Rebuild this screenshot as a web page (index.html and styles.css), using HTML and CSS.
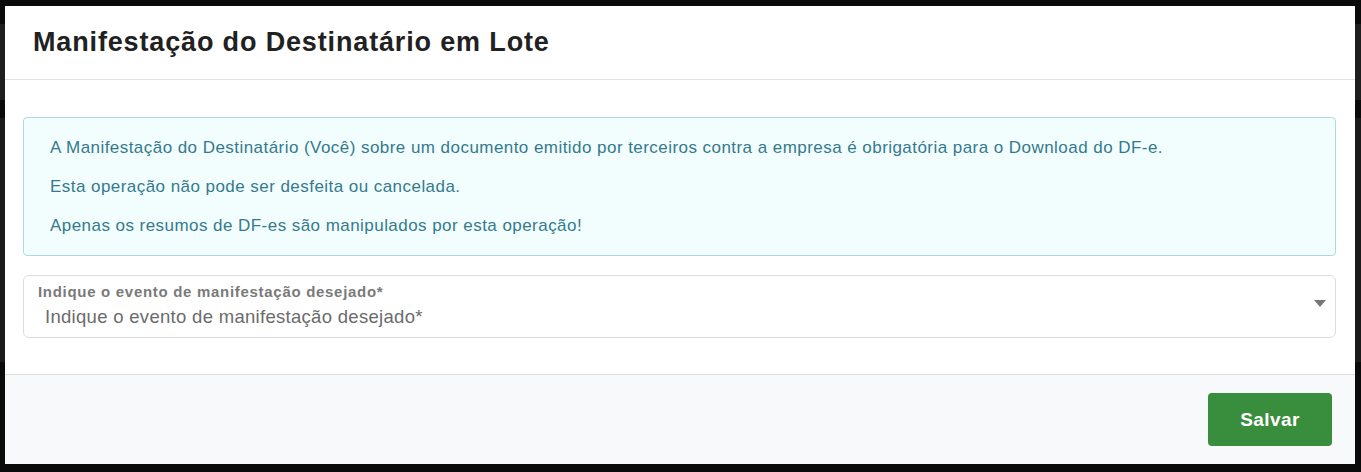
FILE: index.html
```html
<!DOCTYPE html>
<html lang="pt-BR">
<head>
<meta charset="utf-8">
<title>Manifestação do Destinatário em Lote</title>
<link rel="stylesheet" href="styles.css">
</head>
<body>
<div class="modal">
  <header class="modal-header">
    <h2 class="modal-title">Manifestação do Destinatário em Lote</h2>
  </header>
  <main class="modal-body">
    <div class="alert">
      <p>A Manifestação do Destinatário (Você) sobre um documento emitido por terceiros contra a empresa é obrigatória para o Download do DF-e.</p>
      <p>Esta operação não pode ser desfeita ou cancelada.</p>
      <p>Apenas os resumos de DF-es são manipulados por esta operação!</p>
    </div>
    <div class="select">
      <div class="select-text">
        <span class="select-label">Indique o evento de manifestação desejado*</span>
        <span class="select-value">Indique o evento de manifestação desejado*</span>
      </div>
      <svg class="select-arrow" width="12" height="7" viewBox="0 0 12 7"><path d="M0 0H12L6 7Z" fill="#777"/></svg>
    </div>
  </main>
  <footer class="modal-footer">
    <button class="btn-save" type="button">Salvar</button>
  </footer>
</div>
</body>
</html>
```
FILE: styles.css
```css
html, body {
  margin: 0;
  padding: 0;
}
body {
  background: linear-gradient(to bottom, #0a0a0a 0, #0a0a0a 24px, #1e1e1e 24px, #1e1e1e 100px, #0a0a0a 100px, #0a0a0a 118px, #1b1b1b 118px, #1b1b1b 362px, #0a0a0a 362px);
  min-height: 472px;
  padding: 6px 6px 8px 5px;
  box-sizing: border-box;
  font-family: "Liberation Sans", Arial, sans-serif;
}
.modal {
  width: 1350px;
  height: 458px;
  background: #fff;
  display: flex;
  flex-direction: column;
}
.modal-header {
  height: 74px;
  border-bottom: 1px solid #e0e0e0;
  display: flex;
  align-items: center;
  padding-left: 28px;
  box-sizing: border-box;
}
.modal-title {
  margin: 0;
  font-size: 27px;
  letter-spacing: 0.85px;
  font-weight: bold;
  color: #212121;
}
.modal-body {
  padding: 37px 19px 0 18px;
  height: 294px;
  box-sizing: border-box;
  display: flex;
  flex-direction: column;
  gap: 19px;
}
.alert {
  background: #f2fdfe;
  border: 1px solid #aed9e2;
  border-radius: 4px;
  color: #357a8c;
  font-size: 17px;
  letter-spacing: 0.45px;
  padding: 20px 26px 10px 26px;
  height: 139px;
  box-sizing: border-box;
}
.alert p {
  margin: 0 0 19px 0;
  line-height: 20px;
}
.select {
  height: 63px;
  border: 1px solid #dddddd;
  border-radius: 6px;
  box-sizing: border-box;
  display: flex;
  align-items: center;
  padding: 0 9px 0 14px;
}
.select-text {
  flex: 1;
  align-self: flex-start;
  padding-top: 8px;
  display: flex;
  flex-direction: column;
}
.select-label {
  font-size: 15px;
  letter-spacing: 0.7px;
  font-weight: bold;
  color: #7a7a7a;
  line-height: 16px;
}
.select-value {
  font-size: 18.5px;
  letter-spacing: 0.3px;
  color: #6b6b6b;
  line-height: 22px;
  padding-left: 7px;
  margin-top: 6px;
}
.select-arrow {
  margin-top: -6px;
}
.modal-footer {
  flex: 1;
  background: #f8f9fa;
  border-top: 1px solid #dcdcdc;
  display: flex;
  justify-content: flex-end;
  align-items: center;
  padding-right: 23px;
}
.btn-save {
  width: 124px;
  height: 53px;
  background: #388e3c;
  color: #fff;
  border: none;
  border-radius: 4px;
  font-family: "Liberation Sans", Arial, sans-serif;
  font-size: 19px;
  letter-spacing: 0.4px;
  font-weight: bold;
  margin-top: 0;
}
```
